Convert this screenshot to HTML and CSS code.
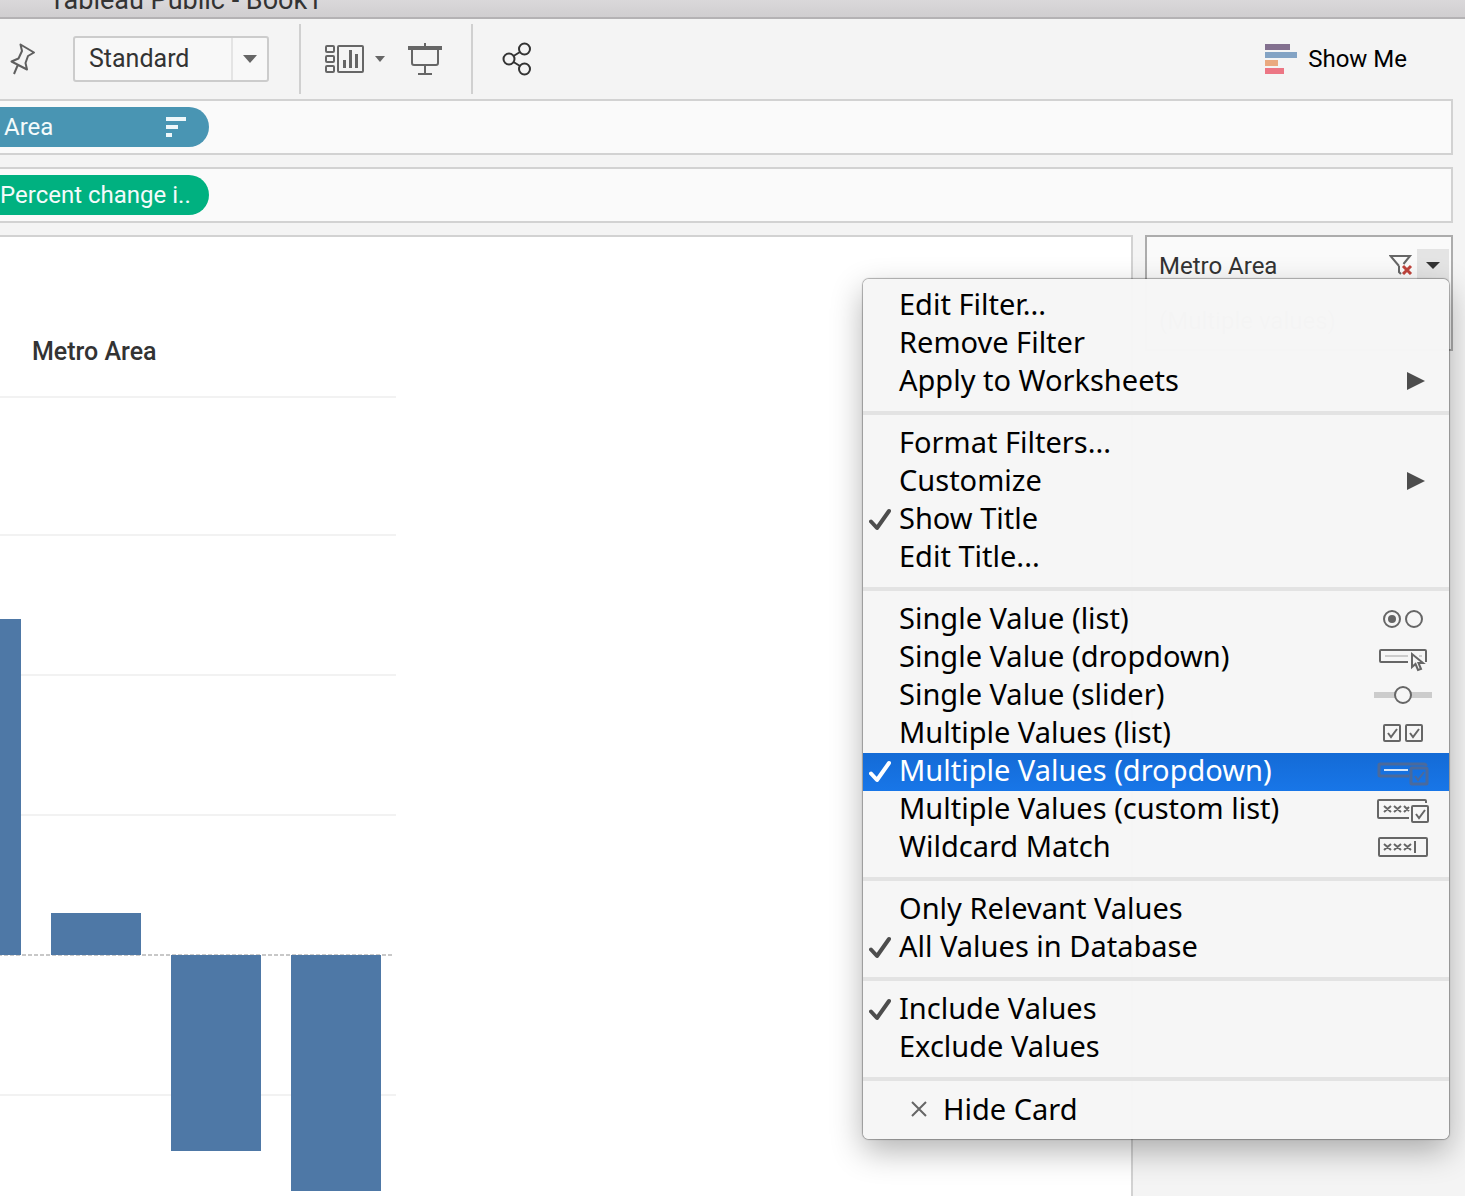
FILE: index.html
```html
<!DOCTYPE html>
<html lang="en">
<head>
<meta charset="utf-8">
<title>Tableau Public - Book1</title>
<link rel="stylesheet" href="styles.css">
</head>
<body>
<header class="titlebar"><h1 class="titlebar-text">Tableau Public - Book1</h1></header>

<div class="toolbar" role="toolbar" aria-label="Worksheet">
  <button class="tool tool-pin" aria-label="Fix axes">
    <svg width="26" height="32" viewBox="0 0 26 32" fill="none" stroke="#5f5f5f" stroke-width="2" stroke-linejoin="round"><path d="M10.500 1.500 24 9.500 18 13 15.500 20 17 26.500 1.500 18.500 8.500 15.500 12 8ZM8 21.500 4 31"/></svg>
  </button>
  <div class="fit">
    <select class="fit-select" aria-label="Fit"><option>Standard</option></select>
    <span class="fit-arrow"><svg width="14" height="8" viewBox="0 0 14 8"><path d="M0 0H14L7 8Z" fill="#666"/></svg></span>
  </div>
  <div class="tool-group">
    <button class="tool tool-cards" aria-label="Show or hide cards">
      <svg width="40" height="30" viewBox="0 0 40 30" fill="none" stroke="#666" stroke-width="2"><rect x="1" y="2" width="8" height="6" rx="1"/><rect x="1" y="12" width="8" height="6" rx="1"/><rect x="1" y="22" width="8" height="6" rx="1"/><rect x="13" y="2" width="25" height="26" rx="1"/><path d="M19.500 16V24M25.500 6V24M31.500 10V24" stroke-width="3"/></svg>
      <svg width="10" height="6" viewBox="0 0 10 6"><path d="M0 0H10L5 6Z" fill="#666"/></svg>
    </button>
    <button class="tool" aria-label="Presentation mode">
      <svg width="34" height="32" viewBox="0 0 34 32" fill="none" stroke="#666" stroke-width="2"><path d="M0 5H34" stroke-width="4"/><path d="M17 0V4M4 6V20Q4 22 6 22H28Q30 22 30 20V6M17 22V31M10 31H24"/></svg>
    </button>
  </div>
  <button class="tool tool-share" aria-label="Share">
    <svg width="30" height="34" viewBox="0 0 30 34" fill="none" stroke="#333" stroke-width="2"><circle cx="7" cy="17" r="5.500"/><circle cx="22.500" cy="7" r="5.500"/><circle cx="22.500" cy="27" r="5.500"/><path d="M11.500 14 18 10M11.500 20 18 24"/></svg>
  </button>
  <button class="tool show-me">
    <svg width="32" height="30" viewBox="0 0 32 30"><path d="M0 0H25V6H0Z" fill="#83708f"/><path d="M0 8H32V14H0Z" fill="#83a3c4"/><path d="M0 16H13V22H0Z" fill="#eaa97f"/><path d="M0 24H19V30H0Z" fill="#ec7684"/></svg>
    Show Me
  </button>
</div>

<div class="workspace">
  <section class="shelf" aria-label="Columns">
    <button class="pill pill-dimension">Area
      <svg width="20" height="20" viewBox="0 0 20 20" fill="#eef7fa"><path d="M0 0H20V4H0ZM0 8H12V12H0ZM0 16H6V20H0Z"/></svg>
    </button>
  </section>
  <section class="shelf" aria-label="Rows">
    <button class="pill pill-measure">Percent change i..</button>
  </section>

  <main class="view">
    <section class="sheet">
      <h2 class="sheet-title">Metro Area</h2>
      <svg class="chart" width="396" height="805" viewBox="0 0 396 805" role="img" aria-label="Percent change by metro area">
        <path d="M0 10H396M0 148H396M0 288H396M0 428H396M0 708H396" stroke="#f2f2f2" stroke-width="2"/>
        <path d="M0 568H392" stroke="#c8c8c8" stroke-width="2" stroke-dasharray="4 2" stroke-dashoffset="2"/>
        <path d="M0 232H21V568H0ZM51 526H141V568H51ZM171 568H261V764H171ZM291 568H381V804H291Z" fill="#4e78a6"/>
      </svg>
    </section>

    <aside class="filters">
      <section class="card">
        <header class="card-head">
          <h3 class="card-title">Metro Area</h3>
          <button class="clear" aria-label="Clear filter">
            <svg width="24" height="20" viewBox="0 0 24 20" fill="none" stroke="#666" stroke-width="2"><path d="M10 11V17L12 19M10 11 1.500 1H21L14.500 9"/><path d="M14 11 22 19M22 11 14 19" stroke="#c0443c" stroke-width="3"/></svg>
          </button>
          <button class="card-caret" aria-label="Card menu" aria-expanded="true"><svg width="14" height="7" viewBox="0 0 14 7"><path d="M0 0H14L7 7Z" fill="#333"/></svg></button>
        </header>
        <select class="values" aria-label="Metro Area values"><option>(Multiple values)</option></select>

        <div class="menu" role="menu">
          <button class="item" role="menuitem">Edit Filter...</button>
          <button class="item" role="menuitem">Remove Filter</button>
          <button class="item" role="menuitem">Apply to Worksheets<svg class="icon" viewBox="0 0 60 38"><path d="M34 9 52 18 34 27Z" fill="#4d4d4d"/></svg></button>
          <hr class="rule">
          <button class="item" role="menuitem">Format Filters...</button>
          <button class="item" role="menuitem">Customize<svg class="icon" viewBox="0 0 60 38"><path d="M34 9 52 18 34 27Z" fill="#4d4d4d"/></svg></button>
          <button class="item checked" role="menuitemcheckbox" aria-checked="true"><svg class="check" viewBox="0 0 22 24"><path d="M2 13.500 8 20 20 3"/></svg>Show Title</button>
          <button class="item" role="menuitem">Edit Title...</button>
          <hr class="rule">
          <button class="item" role="menuitemradio" aria-checked="false">Single Value (list)<svg class="icon line" viewBox="0 0 60 38"><circle cx="19" cy="18" r="8"/><circle cx="19" cy="18" r="4" fill="#666" stroke="none"/><circle cx="41" cy="18" r="8"/></svg></button>
          <button class="item" role="menuitemradio" aria-checked="false">Single Value (dropdown)<svg class="icon line" viewBox="0 0 60 38"><path d="M35 23H8Q7 23 7 22V12Q7 11 8 11H52Q53 11 53 12V23"/><path d="M12 17H35M46 17H49" stroke="#ccc"/><path d="M39 15V28L42.500 25 45 31 48 30 45.500 24H50Z" fill="#f6f6f6" stroke-width="2"/></svg></button>
          <button class="item" role="menuitemradio" aria-checked="false">Single Value (slider)<svg class="icon line" viewBox="0 0 60 38"><path d="M1 18H59" stroke="#ccc" stroke-width="6"/><circle cx="30" cy="18" r="8" fill="#f6f6f6"/></svg></button>
          <button class="item" role="menuitemradio" aria-checked="false">Multiple Values (list)<svg class="icon line" viewBox="0 0 60 38"><rect x="11" y="10" width="16" height="16" rx="1"/><rect x="33" y="10" width="16" height="16" rx="1"/><path d="M15 18 18 22 24 14M37 18 40 22 46 14"/></svg></button>
          <button class="item checked selected" role="menuitemradio" aria-checked="true"><svg class="check" viewBox="0 0 22 24"><path d="M2 13.500 8 20 20 3"/></svg>Multiple Values (dropdown)<svg class="icon line" viewBox="0 0 60 38"><g stroke="#4a6a9c"><path d="M36 23H7Q6 23 6 22V12Q6 11 7 11H51Q53 11 53 13" stroke-width="3"/><path d="M11 17H35" stroke="#d5e6fa"/><rect x="38" y="15" width="16" height="16" rx="1" stroke-width="3"/><path d="M42 23 45 27 51 19"/></g></svg></button>
          <button class="item" role="menuitemradio" aria-checked="false">Multiple Values (custom list)<svg class="icon line" viewBox="0 0 60 38"><path d="M36 27H6Q5 27 5 26V10Q5 9 6 9H52Q53 9 53 10V12M11 15 18 21M18 15 11 21M21 15 28 21M28 15 21 21M31 15 36 20M36 16 31 21"/><rect x="39" y="15" width="16" height="16" rx="1"/><path d="M43 23 46 27 52 19"/></svg></button>
          <button class="item" role="menuitemradio" aria-checked="false">Wildcard Match<svg class="icon line" viewBox="0 0 60 38"><rect x="6" y="9" width="48" height="18" rx="1"/><path d="M11 15 18 21M18 15 11 21M21 15 28 21M28 15 21 21M31 15 38 21M38 15 31 21M42 12V24"/></svg></button>
          <hr class="rule">
          <button class="item" role="menuitemradio" aria-checked="false">Only Relevant Values</button>
          <button class="item checked" role="menuitemradio" aria-checked="true"><svg class="check" viewBox="0 0 22 24"><path d="M2 13.500 8 20 20 3"/></svg>All Values in Database</button>
          <hr class="rule">
          <button class="item checked" role="menuitemradio" aria-checked="true"><svg class="check" viewBox="0 0 22 24"><path d="M2 13.500 8 20 20 3"/></svg>Include Values</button>
          <button class="item" role="menuitemradio" aria-checked="false">Exclude Values</button>
          <hr class="rule">
          <button class="item item-hide" role="menuitem"><svg width="16" height="16" viewBox="0 0 16 16" fill="none" stroke="#666" stroke-width="2"><path d="M1 1 15 15M15 1 1 15"/></svg>Hide Card</button>
        </div>
      </section>
    </aside>
  </main>
</div>
</body>
</html>
```
FILE: styles.css
```css
* { box-sizing: border-box; }

body {
  margin: 0;
  min-height: 100vh;
  display: flex;
  flex-direction: column;
  background: #f4f4f4;
  color: #333;
  font: 24px/30px Roboto, sans-serif;
  overflow-x: hidden;
}

button, select {
  margin: 0;
  padding: 0;
  border: 0;
  background: none;
  color: inherit;
  font: inherit;
  text-align: left;
}

svg { flex: none; display: block; }

h1, h2, h3 { margin: 0; font: inherit; }

/* Window title */
.titlebar {
  height: 19px;
  display: flex;
  align-items: flex-end;
  padding: 0 49px 2px;
  overflow: hidden;
  background: linear-gradient(#dad8da, #d0ced0);
  border-bottom: 2px solid #b4b2b4;
}

.titlebar-text { font-size: 27px; }

/* Toolbar */
.toolbar {
  height: 80px;
  display: flex;
  align-items: center;
  padding: 0 58px 0 10px;
}

.tool { display: flex; align-items: center; }

.tool-pin { margin-right: 37px; }

.fit {
  width: 196px;
  height: 46px;
  display: grid;
  border: 2px solid #ccc;
  border-radius: 3px;
  background: #f8f8f8;
  font-size: 25px;
}

.fit-select {
  grid-area: 1 / 1;
  appearance: none;
  padding: 0 48px 0 14px;
}

.fit-arrow {
  grid-area: 1 / 1;
  justify-self: end;
  width: 36px;
  display: grid;
  place-items: center;
  border-left: 2px solid #e4e4e4;
  pointer-events: none;
}

.tool-group {
  height: 70px;
  display: flex;
  gap: 23px;
  margin-left: 30px;
  padding: 0 29px 0 24px;
  border: solid #d0d0d0;
  border-width: 0 2px;
}

.tool-cards { gap: 10px; }

.tool-share { margin-left: 29px; }

.show-me { margin-left: auto; gap: 11px; color: #000; }

/* Shelves and view */
.workspace {
  flex: 1;
  display: flex;
  flex-direction: column;
  gap: 12px;
  padding-right: 12px;
}

.shelf {
  padding: 6px 0;
  border: 2px solid #d2d2d2;
  border-left: 0;
  background: #fafafa;
}

.pill {
  width: 209px;
  height: 40px;
  display: flex;
  align-items: center;
  justify-content: space-between;
  border-radius: 0 20px 20px 0;
  color: #f4fbfb;
  white-space: nowrap;
}

.pill-dimension { padding: 0 23px 0 4px; background: #4995b3; }
.pill-measure { background: #00b180; }

.view {
  flex: 1;
  display: grid;
  grid-template-columns: 1fr 308px;
  gap: 12px;
}

.sheet {
  border: solid #d2d2d2;
  border-width: 2px 2px 0 0;
  background: #fff;
}

.sheet-title {
  padding: 100px 32px 20px;
  font-size: 25px;
  font-weight: 500;
}

/* Filter card */
.card {
  position: relative;
  height: 116px;
  padding: 12px 2px 0 12px;
  border: 2px solid #acacac;
  background: #fafafa;
}

.card-head { display: flex; }

.card-title { flex: 1; padding-top: 2px; }

.clear { margin-right: 4px; }

.card-caret {
  width: 32px;
  height: 32px;
  display: grid;
  place-items: center;
  background: #e4e4e4;
}

.values {
  width: 280px;
  height: 40px;
  margin-top: 20px;
  appearance: none;
  color: #999;
}

/* Drop-down menu of the card */
.menu {
  position: absolute;
  top: 42px;
  right: 2px;
  width: 586px;
  padding: 8px 0;
  border-radius: 6px;
  background: rgba(246, 246, 246, 0.98);
  box-shadow: 0 0 1px 1px rgba(0, 0, 0, 0.3), 0 12px 32px rgba(0, 0, 0, 0.3);
  color: #000;
  font: 29px/36px "Noto Sans", sans-serif;
}

.item {
  width: 100%;
  height: 38px;
  display: flex;
  align-items: center;
  padding: 0 16px 4px 36px;
  white-space: nowrap;
}

.checked { padding-left: 6px; }

.check {
  width: 22px;
  height: 24px;
  align-self: flex-start;
  margin: 7px 8px 0 0;
  fill: none;
  stroke: #4d4d4d;
  stroke-width: 4px;
  stroke-linecap: round;
  stroke-linejoin: round;
}

.icon {
  width: 60px;
  height: 38px;
  align-self: flex-start;
  margin-left: auto;
}

.line { fill: none; stroke: #666; stroke-width: 2px; }

.selected {
  background: linear-gradient(#146bd6, #1876e8);
  color: #fff;
}

.selected .check { stroke: #fff; }

.item-hide { height: 40px; gap: 16px; padding-left: 48px; }

.rule {
  height: 4px;
  margin: 10px 0;
  border: 0;
  background: #e3e3e3;
}
```
